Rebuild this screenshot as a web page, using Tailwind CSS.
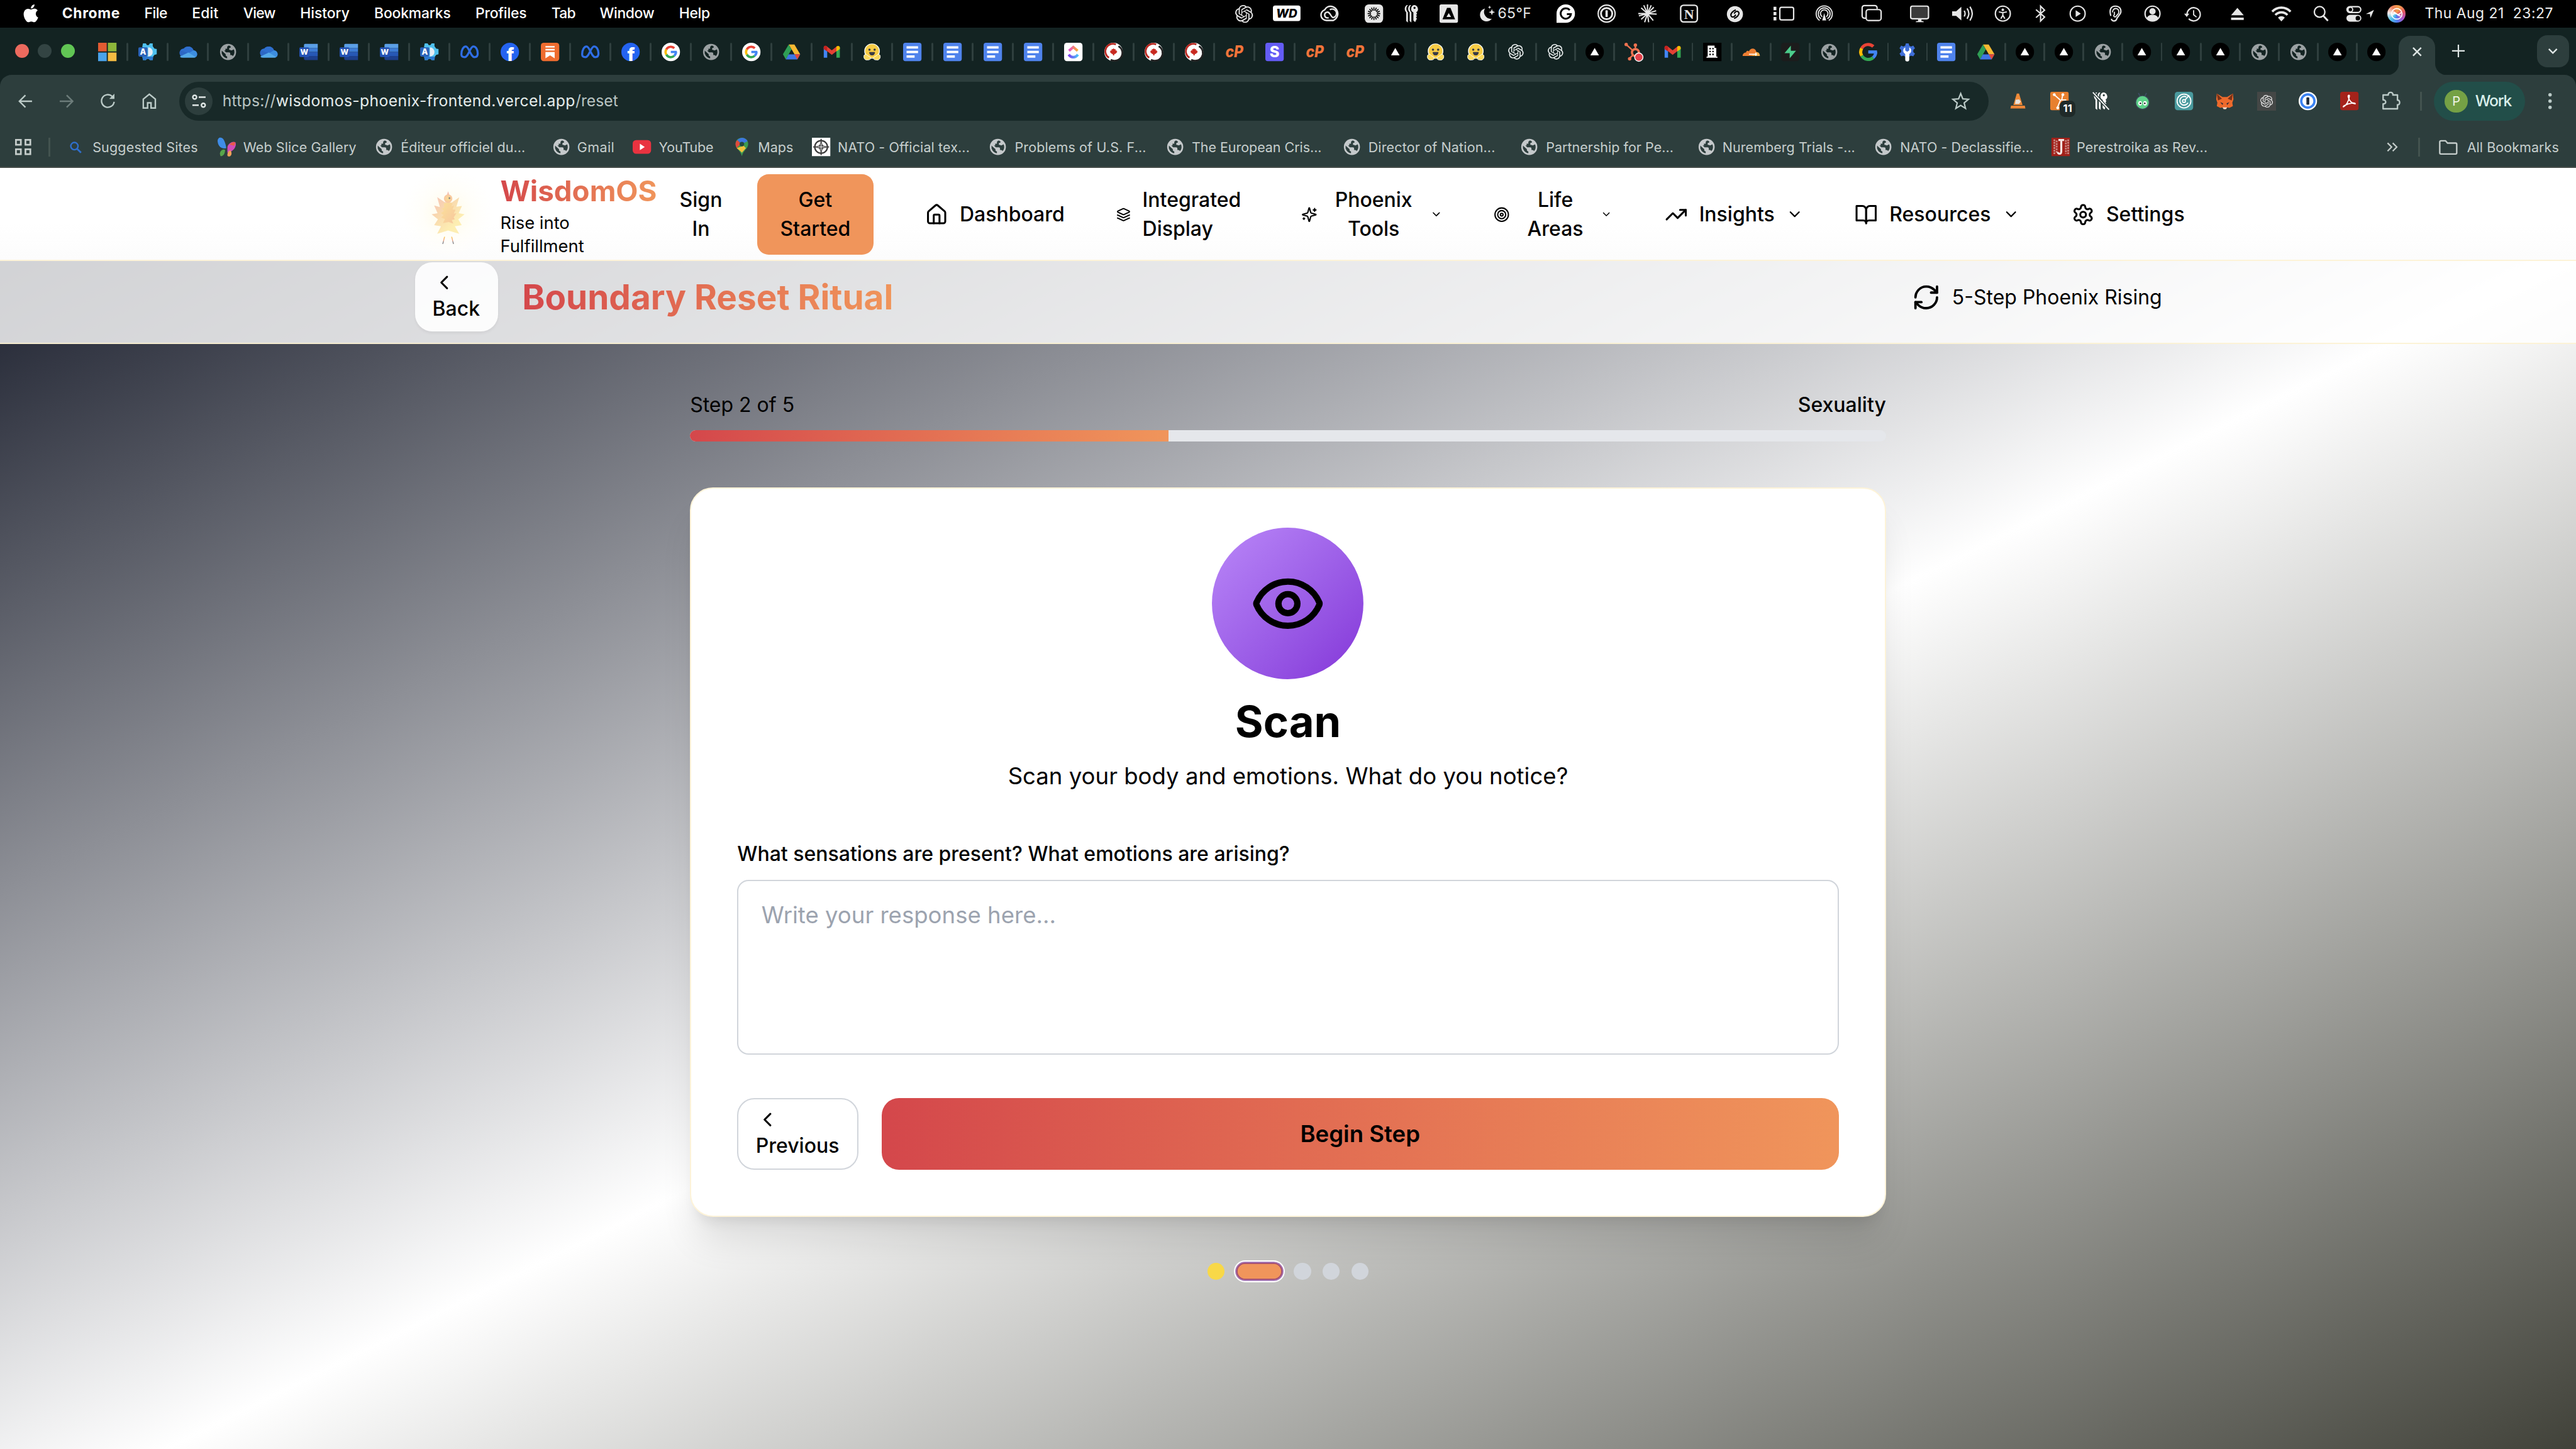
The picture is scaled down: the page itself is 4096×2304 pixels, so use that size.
<!DOCTYPE html>
<html lang="en">
<head>
<meta charset="utf-8">
<title>WisdomOS – Boundary Reset Ritual</title>
<script src="https://cdn.jsdelivr.net/npm/@tailwindcss/browser@4"></script>
</head>
<body class="w-[4096px] h-[2304px] overflow-hidden bg-black font-['Inter',sans-serif]">

<!-- Desktop menu bar and browser frame -->
<div class="[zoom:0.9142857] w-[4480px] h-[292px] flex flex-col">
  <div id="menubar" class="h-[48px] bg-black flex items-center text-white"></div>
  <div class="h-[82px] bg-[#132322] flex items-end">
    <div id="tabs" class="w-[4172px] h-[82px] pt-[2px] flex items-center"></div>
    <div class="relative w-[63px] h-[68px] rounded-t-[20px] bg-[#2d3e3d] flex items-center justify-center text-[#dfe6e5]">
      <svg class="absolute -left-[20px] bottom-0 w-[20px] h-[20px]" viewBox="0 0 20 20"><path d="M20 0V20H0A20 20 0 0 0 20 0Z" fill="#2d3e3d"/></svg>
      <svg class="absolute -right-[20px] bottom-0 w-[20px] h-[20px]" viewBox="0 0 20 20"><path d="M0 0V20H20A20 20 0 0 1 0 0Z" fill="#2d3e3d"/></svg>
      <svg class="w-[16px] h-[16px] mb-[12px]" viewBox="0 0 16 16"><path d="M1 1 15 15M15 1 1 15" stroke="currentColor" stroke-width="2.6" fill="none"/></svg>
    </div>
    <div id="tabtools" class="w-[245px] h-[82px] flex items-center text-[#dfe6e5]"></div>
  </div>
  <div class="bg-[#132322]">
    <div id="toolbar" class="h-[92px] bg-[#2d3e3d] rounded-t-[20px] flex items-center"></div>
  </div>
  <div id="bookmarks" class="h-[68px] bg-[#2d3e3d] flex items-center"></div>
  <div class="h-[2px] bg-[#444c49]"></div>
</div>

<!-- Page -->
<div class="[zoom:2.2857143] w-[1792px] h-[892px] flex flex-col overflow-hidden bg-white text-black">
  <nav class="h-[64.8px] shrink-0 border-b border-[#fdf3d8] bg-linear-to-b from-white from-60% to-[#fcfcfc] flex items-center pl-72 pt-[0.8px] text-sm font-medium">
    <div class="w-12 h-12 shrink-0">
      <svg class="w-12 h-12 overflow-visible" viewBox="180 66 360 360">
        <defs>
          <radialGradient id="glow"><stop offset="0" stop-color="#fffbe6"/><stop offset="0.55" stop-color="#fffef9"/><stop offset="1" stop-color="#fffefb" stop-opacity="0"/></radialGradient>
          <linearGradient id="wing" x1="0.1" y1="0" x2="0.75" y2="0.7"><stop offset="0" stop-color="#f5c6b8"/><stop offset="0.45" stop-color="#f9d9ae"/><stop offset="1" stop-color="#fdeeb2"/></linearGradient>
          <linearGradient id="breast" x1="0" y1="0" x2="1" y2="1"><stop offset="0" stop-color="#fbe09a"/><stop offset="1" stop-color="#f7c79e"/></linearGradient>
          <radialGradient id="head"><stop offset="0" stop-color="#fcdf92"/><stop offset="1" stop-color="#f8c6a2"/></radialGradient>
          <linearGradient id="leg" x1="0" y1="0" x2="0" y2="1"><stop offset="0" stop-color="#fbc94e"/><stop offset="0.5" stop-color="#f0a386"/><stop offset="0.75" stop-color="#77777c"/></linearGradient>
        </defs>
        <circle cx="359" cy="240" r="240" fill="url(#glow)"/>
        <path d="M340 182 302 156 316 208 286 200 304 240 273 246 306 272 286 302 322 308 302 347 359 330 417 347 394 308 430 302 412 272 445 246 414 240 431 202 402 206 417 157 378 184Z" fill="url(#wing)"/>
        <path d="M336 190 359 184 382 190 376 205 390 200 382 220 398 222 388 242 402 240 388 262 394 272 378 275 386 294 362 286 332 292 342 270 322 262 336 250 322 240 338 228 326 215 340 210Z" fill="url(#breast)"/>
        <path d="M359 126 367 148H351Z" fill="#f6c3b2"/>
        <circle cx="359" cy="164" r="22" fill="url(#head)"/>
        <circle cx="366" cy="161" r="5" fill="#8b8d86"/>
        <path d="M343 363 333 401H329L338 363ZM375 363H380L389 401H385Z" fill="url(#leg)"/>
      </svg>
    </div>
    <div class="w-[110px] shrink-0 ml-3">
      <div class="text-xl font-bold w-fit bg-linear-to-r from-[#d4474b] to-[#f0955b] bg-clip-text text-transparent">WisdomOS</div>
      <div class="text-xs font-normal w-20">Rise into Fulfillment</div>
    </div>
    <div class="w-[59.2px] shrink-0 text-center">Sign<br>In</div>
    <div class="w-[80.8px] shrink-0 ml-[9.6px] py-2 rounded-lg bg-[#f0955b] text-center">Get<br>Started</div>
    <div class="w-[133.2px] shrink-0 ml-9 flex items-center gap-2">
      <svg class="w-4 h-4 shrink-0" viewBox="0 0 24 24" fill="none" stroke="currentColor" stroke-width="2" stroke-linecap="round" stroke-linejoin="round"><path d="M15 21v-8a1 1 0 0 0-1-1h-4a1 1 0 0 0-1 1v8"/><path d="M3 10a2 2 0 0 1 .709-1.528l7-5.999a2 2 0 0 1 2.582 0l7 5.999A2 2 0 0 1 21 10v9a2 2 0 0 1-2 2H5a2 2 0 0 1-2-2z"/></svg>
      Dashboard
    </div>
    <div class="w-[128.4px] shrink-0 flex items-center gap-2">
      <svg class="w-[10px] h-4 shrink-0" viewBox="0 0 24 24" fill="none" stroke="currentColor" stroke-width="2" stroke-linecap="round" stroke-linejoin="round"><path d="m12.83 2.18a2 2 0 0 0-1.66 0L2.6 6.08a1 1 0 0 0 0 1.83l8.58 3.91a2 2 0 0 0 1.66 0l8.58-3.9a1 1 0 0 0 0-1.83Z"/><path d="m22 17.65-9.17 4.16a2 2 0 0 1-1.66 0L2 17.65"/><path d="m22 12.65-9.17 4.16a2 2 0 0 1-1.66 0L2 12.65"/></svg>
      <span>Integrated<br>Display</span>
    </div>
    <div class="w-[134px] shrink-0 flex items-center gap-2">
      <svg class="w-[11.2px] h-4 shrink-0" viewBox="0 0 24 24" fill="none" stroke="currentColor" stroke-width="2" stroke-linecap="round" stroke-linejoin="round"><path d="M9.937 15.5A2 2 0 0 0 8.5 14.063l-6.135-1.582a.5.5 0 0 1 0-.962L8.5 9.936A2 2 0 0 0 9.937 8.5l1.582-6.135a.5.5 0 0 1 .963 0L14.063 8.5A2 2 0 0 0 15.5 9.937l6.135 1.581a.5.5 0 0 1 0 .964L15.5 14.063a2 2 0 0 0-1.437 1.437l-1.582 6.135a.5.5 0 0 1-.963 0z"/><path d="M20 3v4M22 5h-4M4 17v2M5 18H3"/></svg>
      <span class="w-[62.4px] text-center">Phoenix<br>Tools</span>
      <svg class="w-[8.6px] h-3 shrink-0" viewBox="0 0 24 24" fill="none" stroke="currentColor" stroke-width="2" stroke-linecap="round" stroke-linejoin="round"><path d="m6 9 6 6 6-6"/></svg>
    </div>
    <div class="w-[118.8px] shrink-0 flex items-center gap-2">
      <svg class="w-[11.2px] h-4 shrink-0" viewBox="0 0 24 24" fill="none" stroke="currentColor" stroke-width="1.9"><circle cx="12" cy="12" r="10"/><circle cx="12" cy="12" r="6"/><circle cx="12" cy="12" r="2"/></svg>
      <span class="w-[47.2px] text-center">Life<br>Areas</span>
      <svg class="w-[8px] h-3 shrink-0" viewBox="0 0 24 24" fill="none" stroke="currentColor" stroke-width="2" stroke-linecap="round" stroke-linejoin="round"><path d="m6 9 6 6 6-6"/></svg>
    </div>
    <div class="w-[132.4px] shrink-0 flex items-center gap-2">
      <svg class="w-4 h-4 shrink-0" viewBox="0 0 24 24" fill="none" stroke="currentColor" stroke-width="2" stroke-linecap="round" stroke-linejoin="round"><path d="M22 7 13.5 15.5 8.5 10.5 2 17"/><path d="M16 7h6v6"/></svg>
      Insights
      <svg class="w-3 h-3 shrink-0" viewBox="0 0 24 24" fill="none" stroke="currentColor" stroke-width="2" stroke-linecap="round" stroke-linejoin="round"><path d="m6 9 6 6 6-6"/></svg>
    </div>
    <div class="w-[150.8px] shrink-0 flex items-center gap-2">
      <svg class="w-4 h-4 shrink-0" viewBox="0 0 24 24" fill="none" stroke="currentColor" stroke-width="2" stroke-linecap="round" stroke-linejoin="round"><path d="M2 3h6a4 4 0 0 1 4 4v14a3 3 0 0 0-3-3H2z"/><path d="M22 3h-6a4 4 0 0 0-4 4v14a3 3 0 0 1 3-3h7z"/></svg>
      Resources
      <svg class="w-3 h-3 shrink-0" viewBox="0 0 24 24" fill="none" stroke="currentColor" stroke-width="2" stroke-linecap="round" stroke-linejoin="round"><path d="m6 9 6 6 6-6"/></svg>
    </div>
    <div class="shrink-0 flex items-center gap-2">
      <svg class="w-4 h-4 shrink-0" viewBox="0 0 24 24" fill="none" stroke="currentColor" stroke-width="2" stroke-linecap="round" stroke-linejoin="round"><path d="M12.22 2h-.44a2 2 0 0 0-2 2v.18a2 2 0 0 1-1 1.73l-.43.25a2 2 0 0 1-2 0l-.15-.08a2 2 0 0 0-2.73.73l-.22.38a2 2 0 0 0 .73 2.73l.15.1a2 2 0 0 1 1 1.72v.51a2 2 0 0 1-1 1.74l-.15.09a2 2 0 0 0-.73 2.73l.22.38a2 2 0 0 0 2.73.73l.15-.08a2 2 0 0 1 2 0l.43.25a2 2 0 0 1 1 1.73V20a2 2 0 0 0 2 2h.44a2 2 0 0 0 2-2v-.18a2 2 0 0 1 1-1.73l.43-.25a2 2 0 0 1 2 0l.15.08a2 2 0 0 0 2.73-.73l.22-.39a2 2 0 0 0-.73-2.73l-.15-.08a2 2 0 0 1-1-1.74v-.5a2 2 0 0 1 1-1.74l.15-.09a2 2 0 0 0 .73-2.73l-.22-.38a2 2 0 0 0-2.73-.73l-.15.08a2 2 0 0 1-2 0l-.43-.25a2 2 0 0 1-1-1.73V4a2 2 0 0 0-2-2z"/><circle cx="12" cy="12" r="3"/></svg>
      Settings
    </div>
  </nav>

  <div class="flex-1 bg-[linear-gradient(to_bottom_right,#1b1f2d,#ffffff_50%,#34352c)] bg-[length:1792px_891.2px] bg-[position:0_-7.2px] bg-no-repeat">
    <header class="h-[57.6px] bg-white/80 border-b border-[#fbf0cc]/80 pl-[288.8px] pr-72 pt-[0.8px] flex items-start">
      <button class="w-[57.6px] h-12 shrink-0 rounded-xl bg-white/90 shadow-xs text-sm font-medium text-left px-3 pt-[4.2px] flex flex-col">
        <svg class="w-4 h-4 mt-[2px]" viewBox="0 0 24 24" fill="none" stroke="currentColor" stroke-width="2" stroke-linecap="round" stroke-linejoin="round"><path d="m15 18-6-6 6-6"/></svg>
        <span>Back</span>
      </button>
      <h1 class="ml-[16.8px] mt-[8.4px] text-2xl font-bold bg-linear-to-r from-[#d4474b] to-[#f0955b] bg-clip-text text-transparent">Boundary Reset Ritual</h1>
      <div class="ml-auto mt-[14.3px] flex items-center gap-2 text-sm">
        <svg class="w-5 h-5" viewBox="0 0 24 24" fill="none" stroke="currentColor" stroke-width="2" stroke-linecap="round" stroke-linejoin="round"><path d="M3 12a9 9 0 0 1 9-9 9.75 9.75 0 0 1 6.74 2.74L21 8"/><path d="M21 3v5h-5"/><path d="M21 12a9 9 0 0 1-9 9 9.75 9.75 0 0 1-6.74-2.74L3 16"/><path d="M8 16H3v5"/></svg>
        5-Step Phoenix Rising
      </div>
    </header>

    <main class="w-[832px] mx-auto pt-8">
      <div class="pt-[0.3px] -mb-[0.3px] flex justify-between text-sm"><span>Step 2 of 5</span><span class="font-medium">Sexuality</span></div>
      <div class="mt-2 h-2 rounded-full bg-[#e5e7eb] overflow-hidden"><div class="h-2 w-2/5 bg-linear-to-r from-[#d4474b] to-[#f0955b]"></div></div>

      <section class="mt-8 h-[507.2px] rounded-2xl border border-[#fdf3d8] bg-white px-8 pt-8 shadow-xl flex flex-col">
        <div class="w-24 h-24 mx-auto rounded-full scale-110 bg-linear-to-br from-[#ba87f8] to-[#8434d8] flex items-center justify-center">
          <svg class="w-12 h-12" viewBox="0 0 24 24" fill="none" stroke="currentColor" stroke-width="2" stroke-linecap="round" stroke-linejoin="round"><path d="M2.062 12.348a1 1 0 0 1 0-.696 10.75 10.75 0 0 1 19.876 0 1 1 0 0 1 0 .696 10.75 10.75 0 0 1-19.876 0"/><circle cx="12" cy="12" r="3"/></svg>
        </div>
        <h2 class="mt-[16.4px] -mb-[0.4px] text-3xl font-bold text-center">Scan</h2>
        <p class="mt-2 text-base text-center">Scan your body and emotions. What do you notice?</p>
        <label class="mt-[32.2px] -mb-[0.2px] text-sm font-medium">What sensations are present? What emotions are arising?</label>
        <div class="mt-2 h-[121.6px] shrink-0 rounded-lg border border-[#d1d5db] px-4 py-3 text-base text-[#9ca3af]">Write your response here...</div>
        <div class="mt-[30.4px] h-[49.6px] flex gap-4">
          <button class="w-[84.4px] shrink-0 rounded-xl border border-[#d1d5db] px-3 pt-[6px] text-sm font-medium flex flex-col items-start">
            <svg class="w-4 h-4" viewBox="0 0 24 24" fill="none" stroke="currentColor" stroke-width="2" stroke-linecap="round" stroke-linejoin="round"><path d="m15 18-6-6 6-6"/></svg>
            <span>Previous</span>
          </button>
          <button class="flex-1 rounded-xl bg-linear-to-r from-[#d4474b] to-[#f0955b] text-base font-semibold">Begin Step</button>
        </div>
      </section>

      <div class="mt-8 flex justify-center gap-2">
        <span class="w-3 h-3 rounded-full bg-[#f8d848]"></span>
        <span class="w-8 h-3 rounded-full bg-[#f0955b] shadow-[inset_0_0_0_0.8px_#a04c74,0_0_0_0.8px_#a071b4,0_0_0_1.7px_#ffffff]"></span>
        <span class="w-3 h-3 rounded-full bg-[#d1d5db]"></span>
        <span class="w-3 h-3 rounded-full bg-[#d1d5db]"></span>
        <span class="w-3 h-3 rounded-full bg-[#d1d5db]"></span>
      </div>
    </main>
  </div>
</div>

<script>
const svg = (inner, w = 32, h = 32, vb) => `<svg width="${w}" height="${h}" viewBox="${vb || `0 0 ${w} ${h}`}" fill="none" class="shrink-0 overflow-visible">${inner}</svg>`;
const letter = (t, x, y, size, fill, extra = '') => `<text x="${x}" y="${y}" font-size="${size}" fill="${fill}" text-anchor="middle" font-family="Inter,sans-serif" font-weight="800" ${extra}>${t}</text>`;
const OPENAI = 'M22.2819 9.8211a5.9847 5.9847 0 0 0-.5157-4.9108 6.0462 6.0462 0 0 0-6.5098-2.9A6.0651 6.0651 0 0 0 4.9807 4.1818a5.9847 5.9847 0 0 0-3.9977 2.9 6.0462 6.0462 0 0 0 .7427 7.0966 5.98 5.98 0 0 0 .511 4.9107 6.051 6.051 0 0 0 6.5146 2.9001A5.9847 5.9847 0 0 0 13.2599 24a6.0557 6.0557 0 0 0 5.7718-4.2058 5.9894 5.9894 0 0 0 3.9977-2.9001 6.0557 6.0557 0 0 0-.7475-7.0729zm-9.022 12.6081a4.4755 4.4755 0 0 1-2.8764-1.0408l.1419-.0804 4.7783-2.7582a.7948.7948 0 0 0 .3927-.6813v-6.7369l2.02 1.1686a.071.071 0 0 1 .038.052v5.5826a4.504 4.504 0 0 1-4.4945 4.4944zm-9.6607-4.1254a4.4708 4.4708 0 0 1-.5346-3.0137l.142.0852 4.783 2.7582a.7712.7712 0 0 0 .7806 0l5.8428-3.3685v2.3324a.0804.0804 0 0 1-.0332.0615L9.74 19.9502a4.4992 4.4992 0 0 1-6.1408-1.6464zM2.3408 7.8956a4.485 4.485 0 0 1 2.3655-1.9728V11.6a.7664.7664 0 0 0 .3879.6765l5.8144 3.3543-2.0201 1.1685a.0757.0757 0 0 1-.071 0l-4.8303-2.7865A4.504 4.504 0 0 1 2.3408 7.872zm16.5963 3.8558L13.1038 8.364 15.1192 7.2a.0757.0757 0 0 1 .071 0l4.8303 2.7913a4.4944 4.4944 0 0 1-.6765 8.1042v-5.6772a.79.79 0 0 0-.407-.667zm2.0107-3.0231l-.142-.0852-4.7735-2.7818a.7759.7759 0 0 0-.7854 0L9.409 9.2297V6.8974a.0662.0662 0 0 1 .0284-.0615l4.8303-2.7866a4.4992 4.4992 0 0 1 6.6802 4.66zM8.3065 12.863l-2.02-1.1638a.0804.0804 0 0 1-.038-.0567V6.0742a4.4992 4.4992 0 0 1 7.3757-3.4537l-.142.0805L8.704 5.459a.7948.7948 0 0 0-.3927.6813zm1.0976-2.3654l2.602-1.4998 2.6069 1.4998v2.9994l-2.5974 1.4997-2.6067-1.4997Z';
const APPLE = 'M12.152 6.896c-.948 0-2.415-1.078-3.96-1.04-2.04.027-3.91 1.183-4.961 3.014-2.117 3.675-.546 9.103 1.519 12.09 1.013 1.454 2.208 3.09 3.792 3.039 1.52-.065 2.09-.987 3.935-.987 1.831 0 2.35.987 3.96.948 1.637-.026 2.676-1.48 3.676-2.948 1.156-1.688 1.636-3.325 1.662-3.415-.039-.013-3.182-1.221-3.22-4.857-.026-3.04 2.48-4.494 2.597-4.559-1.429-2.09-3.623-2.324-4.39-2.376-2-.156-3.675 1.09-4.61 1.09zM15.53 3.83c.843-1.012 1.4-2.427 1.245-3.83-1.207.052-2.662.805-3.532 1.818-.78.896-1.454 2.338-1.273 3.714 1.338.104 2.715-.688 3.559-1.701';
const globe = (c, bg) => svg(`<circle cx="16" cy="16" r="14" fill="${c}"/><path d="M17 4.8c-1.6.6-2.6 1.8-2.6 3.2v2.4h-3v3.1H9.2l3.2 3.2h5.2c1.3 0 2.2.8 2.2 2.1v2.6h1.6c1.3 0 2.3.8 2.7 1.9 1.9-1.9 3-4.5 3-7.3 0-1.6-.4-3.1-1-4.5l-3.9 1.8-4.4-1.3V9.6l3.1-1.8c.1-1.1-1.3-3-3.9-3zM5 13.8A11.2 11.2 0 0 0 14.4 27v-3.2c-1.4 0-2.5-1.1-2.5-2.5v-1.4z" fill="${bg}"/>`);
const googleRing = (r, w) => `<path d="M16 16h${r + w / 2 - 0.5}" stroke="#4285f4" stroke-width="${w}"/><path d="M${16 + r} 16A${r} ${r} 0 0 1 ${16 + r * 0.64} ${16 + r * 0.77}" stroke="#4285f4" stroke-width="${w}"/><path d="M${16 + r * 0.64} ${16 + r * 0.77}A${r} ${r} 0 0 1 ${16 - r * 0.87} ${16 + r * 0.5}" stroke="#34a853" stroke-width="${w}"/><path d="M${16 - r * 0.87} ${16 + r * 0.5}A${r} ${r} 0 0 1 ${16 - r * 0.87} ${16 - r * 0.5}" stroke="#fbbc05" stroke-width="${w}"/><path d="M${16 - r * 0.87} ${16 - r * 0.5}A${r} ${r} 0 0 1 ${16 + r * 0.68} ${16 - r * 0.73}" stroke="#ea4335" stroke-width="${w}"/>`;
const openai = (c, s = 26) => svg(`<path d="${OPENAI}" fill="${c}"/>`, s, s, '0 0 24 24');
const keys = (c) => `<g fill="${c}"><path d="M20 1a7 7 0 0 1 4 12.7l1.5 2.6-1.8 2 1.6 2.2-1.8 2 1.6 2.3L22 31l-3-3V14A7 7 0 0 1 20 1zm1 3.2a1.8 1.8 0 1 0 0 3.6 1.8 1.8 0 0 0 0-3.6z" fill-rule="evenodd"/><path d="M13 1c-4 3-4 9-.5 12.6V29l3 2.5V14C12 10 12 5 15 1.500zM7.500 1C3 4 3 10 6.500 13.600V29l3 2.500V14C6 10 6 5 9.500 1.500z"/></g>`;
const I = {
  apple: svg(`<path d="${APPLE}" fill="#fff"/>`, 31, 31, '0 0 24 24'),
  globe: globe('#9ba1a3', '#132322'),
  bglobe: globe('#c5c9cb', '#2d3e3d'),
  ms: svg('<path d="M0 0h15v15H0z" fill="#e25b32"/><path d="M17 0h15v15H17z" fill="#8db63a"/><path d="M0 17h15v15H0z" fill="#4aa3ea"/><path d="M17 17h15v15H17z" fill="#f4bb42"/>'),
  azureA: svg(`<path d="M8 1h5l2 3h3l2-3h5v5l3 4 4 1v9l-4 1-3 4v5h-5l-2-2h-3l-2 2H8l-1-6V6z" fill="#4fc0ee"/><path d="M17 24h9l-1 6h-5l-2-2h-3l-2 2H8l-1-6z" fill="#2b78cf"/><path d="M17 8a8 8 0 0 1 0 16z" fill="#e6edf6"/><rect x="0" y="8" width="16" height="16" rx="2" fill="#2a62b8"/>${letter('A', 8, 21, 14, '#fff')}`),
  cloud: svg('<path d="M9 25.500A8 8 0 0 1 3 13a8 8 0 0 1 6-3A10 10 0 0 1 26 13a7 7 0 0 1 5 11z" fill="#2c67c4"/><path d="M9 10a10 10 0 0 1 17 3l-9 5-14-5a8 8 0 0 1 6-3z" fill="#2f6fce"/><path d="M17 18l9-5a7 7 0 0 1 4 12z" fill="#3d8ee0"/><path d="M2 24l15-7 13 8a6 6 0 0 1-3 1H8a7 7 0 0 1-6-2z" fill="#54a9e8"/>'),
  word: svg(`<path d="M10 2h22v7H8V4a2 2 0 0 1 2-2z" fill="#5b9fe6"/><path d="M8 9h24v7H8z" fill="#3d7cd4"/><path d="M8 16h24v7H8z" fill="#2758b5"/><path d="M8 23h24v7H10a2 2 0 0 1-2-2z" fill="#1d3f8c"/><rect x="0" y="8" width="17" height="17" rx="2" fill="#2452b4"/>${letter('W', 8.500, 21, 13, '#fff')}`),
  meta: svg('<path d="M1.800 20C1.800 12 5.500 6.500 9.500 6.500 15 6.500 18 25 24.500 25 28.500 25 30.200 22 30.200 18.500 30.200 12 27 6.500 22.500 6.500 17 6.500 14 25 7.500 25 3.500 25 1.800 23.500 1.800 20Z" stroke="#2f6ee6" stroke-width="3.600"/>'),
  fb: svg(`<circle cx="16" cy="16" r="16" fill="#2463f0"/>${letter('f', 17, 32, 32, '#fff')}`),
  substack: svg('<rect width="32" height="32" rx="5" fill="#ef6c2f"/><path d="M8 7h16M8 12h16" stroke="#fff" stroke-width="2.600"/><path d="M8 16h16v11l-8-5-8 5z" fill="#fff"/>'),
  google: svg(`<circle cx="16" cy="16" r="16" fill="#fff"/>${googleRing(9, 4)}`),
  googleBare: svg(googleRing(13, 5.5)),
  drive: svg('<path d="M11 3h10l10 17H21z" fill="#f6b932"/><path d="M11 3l5 8.700L6 29l-5-9z" fill="#2f9e55"/><path d="M11 20h20l-5 9H6z" fill="#3f76e4"/><path d="M21 20h10l-5 9z" fill="#e2493a"/><path d="M16 11.700 20.700 20H11.300z" fill="#132322"/>'),
  gmail: svg('<path d="M2 8v18h6V13z" fill="#4285f4"/><path d="M30 8v18h-6V13z" fill="#34a853"/><path d="M2 8c0-3 3-3.500 5-2l9 7 9-7v8l-9 7-9-7-5-3z" fill="#e34134"/><path d="M24 6.500c3-2 6-1 6 2V11l-6 4z" fill="#fbbc04"/><path d="M2 8v3l6 4V6.500C5 4 2 5 2 8z" fill="#c5221f"/>'),
  hug: svg('<ellipse cx="16" cy="14.500" rx="13.500" ry="13" fill="#fff"/><circle cx="16" cy="14.500" r="12" fill="#f8cc45"/><circle cx="11.500" cy="12" r="2" fill="#3a3b45"/><circle cx="20.500" cy="12" r="2" fill="#3a3b45"/><path d="M11 16h10c0 4-2 6-5 6s-5-2-5-6z" fill="#3a3b45"/><path d="M2 22c2-3 5-2 6 0l5 3c2 4-2 5-6 5s-6-4-5-8zM30 22c-2-3-5-2-6 0l-5 3c-2 4 2 5 6 5s6-4 5-8z" fill="#fbd95b" stroke="#fff" stroke-width="1"/>'),
  docs: svg('<rect width="32" height="32" rx="4" fill="#4f83ec"/><path d="M6 8h20M6 16h20M6 24h14" stroke="#fff" stroke-width="4"/>'),
  clickup: svg('<defs><linearGradient id="cu1"><stop offset="0" stop-color="#e84bd0"/><stop offset="1" stop-color="#f9b02f"/></linearGradient><linearGradient id="cu2"><stop offset="0" stop-color="#7d3ff0"/><stop offset="1" stop-color="#4dc3f7"/></linearGradient></defs><rect width="32" height="32" rx="5" fill="#fff"/><path d="M8.500 14 16 7.500 23.500 14" stroke="url(#cu1)" stroke-width="4.500"/><path d="M8 20.500c4 6 12 6 16 0" stroke="url(#cu2)" stroke-width="4.500"/>'),
  maple: svg('<circle cx="16" cy="16" r="16" fill="#fff"/><path d="M20 3A13 13 0 0 0 8 26" stroke="#b9271f" stroke-width="3"/><path d="M11 29.500A13.500 13.500 0 0 0 24.500 6" stroke="#222" stroke-width="3"/><path d="M16 10l1.500 2 1.500-.6-.4 3.200 2-1.200.5 2 .9.400-3 3.200H16.700v2.500h-1.400V19H13l-3-3.200.9-.4.500-2 2 1.200-.4-3.200 1.500.6z" fill="#c8281f" stroke="#c8281f"/>'),
  cp: svg(letter('cP', 16, 25, 28, '#f2743a', 'font-style="italic" textLength="31" lengthAdjust="spacingAndGlyphs"')),
  s: svg(`<rect width="32" height="32" rx="4" fill="#645cf5"/>${letter('S', 16, 25, 26, '#fff')}`),
  vercel: svg('<circle cx="16" cy="16" r="16" fill="#000"/><path d="M16 9l7.500 13h-15z" fill="#fff"/>'),
  gpt: openai('#e8ecec', 27),
  hubspot: svg('<g stroke="#ee7250" fill="none"><circle cx="19" cy="17" r="6" stroke-width="4"/><path d="M19 11V5M14 13 4 4M14 22l-5 5" stroke-width="2.600"/></g><g fill="#ee7250"><circle cx="19" cy="4" r="3"/><circle cx="3" cy="3" r="3"/><circle cx="9" cy="28" r="3"/></g><circle cx="25" cy="25" r="8" fill="#fff"/><circle cx="25" cy="25" r="6.500" fill="#e2434c"/>'),
  building: svg('<path d="M0 0h32v32H0z" fill="#000"/><path d="M8 5h12v4h3v15h2v2H6v-2h2z" fill="#fff"/><path d="M11 9h2.500v2.500H11zM16 9h2.500v2.500H16zM11 14h2.500v2.500H11zM16 14h2.500v2.500H16zM11 19h2.500v2.500H11zM16 19h2.500v2.500H16z" fill="#000"/>'),
  cloudflare: svg('<path d="M1 23c0-4 3-6 6-6 0-3 3-4 5-2 2-6 11-7 13 1l-3 7z" fill="#ee7f33"/><path d="M25 16c4 0 6 3 6 7H16z" fill="#f5ac4a"/><path d="M12 20h14M24 17v6" stroke="#fff" stroke-width="1.500"/>'),
  supabase: svg('<rect width="32" height="32" rx="5" fill="#1c1c1c"/><path d="M17 5v9h9L15 27v-9H6z" fill="#4ccb8b"/>'),
  wrench: svg('<path d="M13.500 1h5l1 4 3 1.500 4-1.500 3 4.500-3 3v3.500l3 3-3 4.500-4-1-3 1.500-1 3h-5l-1-3-3-1.500-4 1-3-4.500 3-3v-3.500l-3-3L5.500 5l4 1.500 3-1.500z" fill="#3f6fd9"/><path d="M12.500 8v5.500L16 15.500l3.500-2V8a6.500 6.500 0 0 1 0 11.500V29a3.500 3.500 0 0 1-7 0v-9.500A6.500 6.500 0 0 1 12.500 8z" fill="#fff"/>'),
};

/* Lays items out in a row: [left, width, html]. */
function row(id, items) {
  let edge = 0, out = '';
  for (const [x, w, html] of items) {
    out += `<div class="shrink-0 flex items-center justify-center" style="width:${w}px;margin-left:${x - edge}px">${html}</div>`;
    edge = x + w;
  }
  document.getElementById(id).innerHTML = out;
}
const mid = (c, html, w = 32) => [c - w / 2, w, html];

/* Label tracked to fill its slot. */
const ctx = document.createElement('canvas').getContext('2d');
function label(x, w, text, size, cls, weight = 400) {
  ctx.font = `${weight} ${size}px Inter`;
  const ls = (w - ctx.measureText(text).width) / text.length;
  return [x, w, `<span class="whitespace-pre w-full ${cls}" style="font-size:${size}px;font-weight:${weight};letter-spacing:${ls.toFixed(3)}px">${text}</span>`];
}
const g = '#e6e6e6';
const M = (x, x2, t, wt = 500) => label(x, x2 - x, t, 25, 'pb-[2px]', wt);

row('menubar', [
  mid(54, `<div class="pb-[2px]">${I.apple}</div>`, 32),
  M(108, 209, 'Chrome', 700), M(251, 291, 'File'), M(334, 380, 'Edit'), M(423, 479, 'View'), M(522, 608, 'History'),
  M(651, 784, 'Bookmarks'), M(827, 916, 'Profiles'), M(959, 1001, 'Tab'), M(1043, 1138, 'Window'), M(1181, 1235, 'Help'),
  mid(2164, openai(g, 31)),
  mid(2238, svg(`<rect y="2" width="48" height="27" rx="4" fill="#fff"/>${letter('WD', 24, 23, 20, '#000', 'font-style="italic" textLength="37" lengthAdjust="spacingAndGlyphs"')}`, 48), 48),
  mid(2315, svg('<path d="M13 5.500a12 12 0 1 1 10 23.500H11A9.500 9.500 0 0 1 8 10.500 12 12 0 0 1 13 5.500z" stroke="#e6e6e6" stroke-width="2.600"/><path d="M17 10.500a7.500 7.500 0 1 1 6 13.500c-4 0-6-12-12-9a5 5 0 0 0 1 9.500h3" stroke="#e6e6e6" stroke-width="2.600"/>', 38, 34), 38),
  mid(2390, svg('<rect width="32" height="32" rx="7" fill="#e6e6e6"/><path d="M16 5v6M16 21v6M5 16h6M21 16h6M8.200 8.200l4.200 4.200M19.600 19.600l4.200 4.200M23.800 8.200l-4.200 4.200M12.400 19.600l-4.200 4.200M11.800 5.800l2 5M20.200 5.800l-2 5M11.800 26.200l2-5M20.200 26.200l-2-5M5.800 11.800l5 2M26.200 11.800l-5 2M5.800 20.200l5-2M26.200 20.200l-5-2" stroke="#000" stroke-width="1.800"/>')),
  mid(2455, svg(keys(g))),
  mid(2520, svg('<rect width="32" height="32" rx="3" fill="#e6e6e6"/><path d="M13 6h6l8 20H5z" fill="#000"/><path d="M16 15l4 7h-8z" fill="#e6e6e6"/>')),
  mid(2587.5, svg('<path d="M9 7a12 12 0 0 0 12 18A11.500 11.500 0 1 1 9 7z" fill="#e6e6e6"/><path d="M21 8l1.500 4 4 1.500-4 1.500L21 19l-1.500-4-4-1.500 4-1.500zM17 2l.8 2.200L20 5l-2.200.8L17 8l-.8-2.200L14 5l2.200-.8z" fill="#e6e6e6"/>', 28)),
  label(2605, 59, '65°F', 25, 'pb-[2px] text-[#e6e6e6]'),
  mid(2723.7, svg('<path d="M0 32V16A16 16 0 1 1 16 32z" fill="#fff"/><path d="M23 10a9 9 0 1 0 2 7h-7" stroke="#000" stroke-width="3.200"/>')),
  mid(2794, svg('<circle cx="16" cy="16" r="14.700" stroke="#e6e6e6" stroke-width="2.400"/><circle cx="16" cy="16" r="9.800" stroke="#e6e6e6" stroke-width="3.200"/><rect x="14" y="10" width="4" height="12" rx="1" fill="#e6e6e6"/>')),
  mid(2866, svg('<path d="M16 16V0M16 16 18 31M16 16H0M16 16 32 17M16 16 5 6M16 16 27 5M16 16 5 26M16 16 26 28M16 16 9.500 1.500M16 16 11 31M16 16 22.500 1.500M16 16 31 11M16 16 1 20" stroke="#e6e6e6" stroke-width="2.200"/>')),
  mid(2938, svg('<rect x="1.500" y="1.500" width="29" height="29" rx="5" stroke="#e6e6e6" stroke-width="2.600"/><text x="16" y="25" font-size="24" font-weight="700" text-anchor="middle" fill="#e6e6e6" font-family="Liberation Serif,serif">N</text>')),
  mid(3017.6, svg('<circle cx="16" cy="17" r="14" fill="#e6e6e6"/><path d="M17.500 9.500c-5 2-9 6-8.500 9.500.5 3 4 4 6.500 1.500l2-2.500M14.500 24.500c5-2 9-6 8.500-9.500-.5-3-4-4-6.500-1.500l-2 2.500" stroke="#000" stroke-width="2.300"/>')),
  mid(3102.5, svg('<rect x="11" y="5" width="24" height="22" rx="3" stroke="#e6e6e6" stroke-width="2.400"/><path d="M0 4h5v6H0zM0 13h5v6H0zM0 22h5v6H0z" fill="#e6e6e6"/>', 36), 36),
  mid(3173, svg('<path d="M8 28A14 14 0 1 1 24 28M10.500 25A10.300 10.300 0 1 1 21.500 25M12.500 21.500A6.500 6.500 0 1 1 19.500 21.500" stroke="#e6e6e6" stroke-width="2"/><path d="M16 15l3.500 13h-7z" fill="#e6e6e6"/>')),
  mid(3255.6, svg('<path d="M8 24H5a4 4 0 0 1-4-4V6a4 4 0 0 1 4-4h18a4 4 0 0 1 4 4v2" stroke="#e6e6e6" stroke-width="2.400"/><rect x="8" y="9" width="26" height="19" rx="4" stroke="#e6e6e6" stroke-width="2.400"/>', 36), 36),
  mid(3339.7, svg('<rect x="1.200" y="3" width="31" height="22" rx="3" fill="#3a3a3a" stroke="#e6e6e6" stroke-width="2.400"/><path d="M10 31c0-2 2-2 4-2v-4h6v4c2 0 4 0 4 2z" fill="#e6e6e6"/>', 34), 34),
  mid(3414, svg('<path d="M0 12h7l9-8v24l-9-8H0z" fill="#e6e6e6"/><path d="M21 11q3 5 0 10M26 7q6 9 0 18M31 4q8 12 0 24" stroke="#e6e6e6" stroke-width="2.400"/>', 38), 38),
  mid(3484, svg('<circle cx="16" cy="16" r="13" stroke="#e6e6e6" stroke-width="2.400"/><circle cx="16" cy="9.500" r="2.300" fill="#e6e6e6"/><path d="M9 13l7 1.500 7-1.500M16 14v5l-3.500 6M16 19l3.500 6" stroke="#e6e6e6" stroke-width="2.200"/>')),
  mid(3549, svg('<path d="M8 9l15 13-7 7V3l7 7L8 23" stroke="#e6e6e6" stroke-width="2.300"/>')),
  mid(3614, svg('<circle cx="16" cy="16" r="13" stroke="#e6e6e6" stroke-width="2.400"/><path d="M12.500 10l9 6-9 6z" fill="#e6e6e6"/>')),
  mid(3680, svg('<path d="M8 20C5 9 8 3 16 3c7 0 11 5 9 12-2 5-6 6-7 11-2 4-8 4-9-1" stroke="#e6e6e6" stroke-width="2.400"/><path d="M11 14c0-9 11-9 11-1 0 5-4 5-5 8-3 2-5-1-3-3s-2-2 1-5" stroke="#e6e6e6" stroke-width="2"/>')),
  mid(3744, svg('<circle cx="16" cy="16" r="13" stroke="#e6e6e6" stroke-width="2.400"/><circle cx="16" cy="12" r="5.500" fill="#e6e6e6"/><path d="M6 24c2-8 18-8 20 0-5 6-15 6-20 0z" fill="#e6e6e6"/>')),
  mid(3814, svg('<path d="M6 17A11.500 11.500 0 1 1 9 25" stroke="#e6e6e6" stroke-width="2.400"/><path d="M1 16h9l-4.500 6z" fill="#e6e6e6"/><path d="M17.500 10v8l5 4" stroke="#e6e6e6" stroke-width="2"/>')),
  mid(3891.500, svg('<path d="M16 6l11 13H5zM5 23h22v4H5z" fill="#e6e6e6"/>')),
  mid(3968, svg('<path d="M1 12.500a22 22 0 0 1 32 0M6.500 18.500a14 14 0 0 1 21 0" stroke="#e6e6e6" stroke-width="4"/><path d="M11 23a8.500 8.500 0 0 1 12 0l-6 6.500z" fill="#e6e6e6"/>', 34), 34),
  mid(4037, svg('<circle cx="13.500" cy="13" r="9.200" stroke="#e6e6e6" stroke-width="2.500"/><path d="M20 20l8 8.500" stroke="#e6e6e6" stroke-width="3.200"/>')),
  mid(4094, svg('<rect x="2" y="4" width="24" height="10" rx="5" stroke="#e6e6e6" stroke-width="2.400"/><circle cx="8" cy="9" r="4" stroke="#e6e6e6" stroke-width="2"/><rect x="1" y="18" width="26" height="12" rx="6" fill="#e6e6e6"/><circle cx="21" cy="24" r="4" fill="#000"/>', 28), 28),
  mid(4122, svg('<path d="M15 3 9 17 8 10 1 10z" fill="#e6e6e6"/>', 16, 20), 16),
  mid(4168.500, '<div class="w-[31px] h-[31px] rounded-full bg-[conic-gradient(from_20deg,#f0a24a,#e7595f,#b455c7,#4f7df0,#53c4e8,#f3e9ea,#f07f5a,#f0a24a)] flex items-center justify-center">' + svg('<circle cx="12" cy="12" r="10" stroke="#fff" stroke-width="2"/><path d="M4 15C8 4 14 20 20 9M5 9c4-3 10 10 14 6" stroke="#fff" stroke-width="2"/>', 22, 22, '0 0 24 24') + '</div>'),
  label(4217.500, 224, 'Thu Aug 21  23:27', 25, 'pb-[2px] text-[#ececec]'),
]);

const order = 'ms azureA cloud globe cloud word word word azureA meta fb substack meta fb google globe google drive gmail hug docs docs docs docs clickup maple maple maple cp s cp cp vercel hug hug gpt gpt vercel hubspot gmail building cloudflare supabase globe googleBare wrench docs drive vercel vercel globe vercel vercel vercel globe globe vercel vercel'.split(' ');
const dot = (cls) => `<div class="w-[24px] h-[24px] mb-[2px] rounded-full ${cls}"></div>`;
row('tabs', [
  mid(38, dot('bg-[#ec6a5e]'), 24), mid(78, dot('bg-[#334443]'), 24), mid(118, dot('bg-[#61c554]'), 24),
  ...order.map((k, i) => {
    const w = i < 36 ? 70 : 68, x = i < 36 ? 153 + i * 70 : 2673 + (i - 36) * 68;
    return [x, w, `<div class="flex-1 flex items-center justify-center">${I[k]}</div><div class="w-[3px] h-[32px] rounded-full ${i < order.length - 1 ? 'bg-[#2f3f3e]' : ''}"></div>`];
  }),
]);
row('tabtools', [
  mid(40.500, svg('<path d="M12 1v22M1 12h22" stroke="currentColor" stroke-width="2.400"/>', 24, 24), 24),
  [177, 56, '<div class="w-[56px] h-[56px] rounded-[18px] bg-[#2d3e3d] flex items-center justify-center">' + svg('<path d="M2 2l7 7 7-7" stroke="currentColor" stroke-width="2.600"/>', 18, 12) + '</div>'],
]);

row('toolbar', [
  mid(44, svg('<path d="M24 12H2M12.500 1.500 2 12l10.500 10.500" stroke="#bccbc8" stroke-width="2.600"/>', 25, 24), 25),
  mid(116, svg('<path d="M0 12h22M12 1.500 22.500 12 12 22.500" stroke="#6d7d7b" stroke-width="2.600"/>', 24, 24), 24),
  mid(188, svg('<path d="M23.500 14A11 11 0 1 1 20 4.500l3 3" stroke="#bccbc8" stroke-width="2.600"/><path d="M24 0v9h-9z" fill="#bccbc8"/>', 26, 26), 26),
  mid(260, svg('<path d="M2 10.500 12.500 2 23 10.500V26h-7.500v-9h-6v9H2z" stroke="#bccbc8" stroke-width="2.600"/>', 25, 28), 25),
  [312, 3146, '<div class="w-full h-[68px] rounded-full bg-[#182928] flex items-center"><div class="ml-[10px] w-[48px] h-[48px] rounded-full bg-[#2d3e3d] flex items-center justify-center">'
    + svg('<circle cx="5" cy="6" r="3.300" stroke="#dfe6e5" stroke-width="2.600"/><path d="M12 6h12M1 20h11" stroke="#dfe6e5" stroke-width="2.800"/><circle cx="20" cy="20" r="3.300" stroke="#dfe6e5" stroke-width="2.600"/>', 25, 26)
    + '</div><div id="url" class="ml-[17px] flex"></div><div class="ml-auto mr-[32px]">'
    + svg('<path d="M16 3l3.700 9.200 9.800.7-7.500 6.300 2.400 9.600L16 23.500l-8.400 5.300L10 19.200 2.500 12.900l9.800-.7z" stroke="#bccbc8" stroke-width="2.400"/>') + '</div></div>'],
  mid(3510, svg('<path d="M14 3h4l6 20H8z" fill="#f08a38"/><path d="M4 24h24l1 5H3z" fill="#ee8637"/><path d="M12 14l6-1 3 4-3 4h-7z" fill="#e8e3dd"/>')),
  mid(3582, '<div class="relative">' + svg('<rect width="32" height="32" rx="3" fill="#e8802f"/><g stroke="#fff" stroke-width="2"><path d="M7 5l10 9M22 4l-2 10M18 14l-5 12M18 14h10"/></g><g fill="#fff"><circle cx="7" cy="5" r="2.500"/><circle cx="22" cy="5" r="2.500"/><circle cx="13" cy="28" r="2.500"/></g>')
    + '<span class="absolute left-[16px] top-[15px] w-[28px] h-[28px] rounded-[9px] bg-[#1f2a29] text-white text-[18px] font-bold leading-[28px] text-center">11</span></div>'),
  mid(3654, svg(keys('#fff') + '<path d="M2 1l28 30" stroke="#2d3e3d" stroke-width="5"/><path d="M2 1l28 30" stroke="#fff" stroke-width="2"/>')),
  mid(3726, svg('<path d="M12 8 9 2M20 8l3-6" stroke="#3f4c63" stroke-width="2"/><circle cx="16" cy="18.500" r="12.500" fill="#3a4b58"/><circle cx="16" cy="18.500" r="11" fill="#5fd28a"/><ellipse cx="12" cy="20" rx="3.200" ry="3.800" fill="#fff"/><ellipse cx="20.500" cy="20" rx="3.200" ry="3.800" fill="#fff"/><circle cx="12.500" cy="20" r="1.400" fill="#222"/><circle cx="20" cy="20" r="1.400" fill="#222"/>')),
  mid(3798, svg('<rect width="32" height="32" rx="5" fill="#4a9a9e"/><circle cx="16" cy="16" r="12" stroke="#fff" stroke-width="2"/><path d="M20 9A7.500 7.500 0 1 0 23 19" stroke="#fff" stroke-width="2.200"/><circle cx="16" cy="16" r="2.500" stroke="#fff" stroke-width="2"/><path d="M18 14l7-8" stroke="#fff" stroke-width="2"/>')),
  mid(3870, svg('<path d="M2 3l10 6h8l10-6 1 10-2 6 1 6-6 3-4-1-2 3h-4l-2-3-4 1-6-3 1-6-2-6z" fill="#ee6a2c"/><path d="M2 3l9 9-7 3zM30 3l-9 9 7 3z" fill="#7a3218"/><path d="M8 18l5 2-1 3zM24 18l-5 2 1 3z" fill="#2c2c3a"/><path d="M12 27h8l-2 3h-4z" fill="#e9dfd8"/>')),
  mid(3942, '<div class="w-[32px] h-[32px] bg-[#444746] flex items-center justify-center">' + openai('#e2e2e2', 22) + '</div>'),
  mid(4014, svg('<circle cx="16" cy="16" r="16" fill="#fff"/><circle cx="16" cy="16" r="11.500" stroke="#3b82f2" stroke-width="4"/><rect x="13.500" y="9.500" width="5" height="13" rx="1.500" fill="#1e2a3a"/>')),
  mid(4086, svg('<rect width="32" height="32" rx="4" fill="#a5231b"/><path d="M6 26c4-2 9-9 10-18 1-3-3-3-2 1 2 7 6 11 12 12 2-2-8-3-19 3-2 2-2 2-1 2z" stroke="#fff" stroke-width="2"/>')),
  mid(4158, svg('<path d="M2.500 5.500h9c-1-6 9-6 8 0h8v9c5-1 5 9 0 8v7h-25v-8.500c6 0 6-7 0-7z" stroke="#bccbc8" stroke-width="2.600" stroke-linejoin="round"/>')),
  mid(4211, '<div class="w-[3px] h-[32px] bg-[#43534f]"></div>', 3),
  [4233, 159, '<div class="w-full h-[68px] rounded-full bg-[#224e49] flex items-center"><div class="ml-[19px] w-[40px] h-[40px] rounded-full bg-[#75a145] text-[#eef5e8] text-[22px] leading-[40px] text-center">P</div><div id="work" class="ml-[13px] flex"></div></div>'],
  mid(4435.600, svg('<circle cx="3" cy="3" r="3" fill="#bccbc8"/><circle cx="3" cy="14" r="3" fill="#bccbc8"/><circle cx="3" cy="25" r="3" fill="#bccbc8"/>', 6, 28), 6),
]);
row('url', [
  label(0, 93, 'https://', 27, 'text-[#b9c4c2]'),
  label(93, 521, 'wisdomos-phoenix-frontend.vercel.app', 27, 'text-[#e4ebea]'),
  label(614, 74, '/reset', 27, 'text-[#b9c4c2]'),
]);
row('work', [label(0, 63, 'Work', 27, 'text-[#d9eeea]', 500)]);

const B = (x, x2, t) => label(x, x2 - x, t, 23.500, 'text-[#c6cecd]');
const bg = (c) => mid(c, I.bglobe);
row('bookmarks', [
  mid(40.600, svg('<path d="M1.500 1.500h8.500v8.500H1.500zM18 1.500h8.500v8.500H18zM1.500 18h8.500v8.500H1.500zM18 18h8.500v8.500H18z" stroke="#c5cdcb" stroke-width="3"/>', 28, 28), 28),
  mid(86, '<div class="w-[3px] h-[32px] bg-[#43534f]"></div>', 3),
  mid(131.500, svg('<circle cx="8" cy="8" r="6.300" stroke="#2f6fcc" stroke-width="2.600"/><path d="M12.500 12.500l7 7" stroke="#2f6fcc" stroke-width="3"/>', 20, 20), 20),
  B(161, 344.500, 'Suggested Sites'),
  mid(394, svg('<path d="M0 6C0-2 8-2 11 4c2 4 4 10 4 14C9 20 1 17 0 6z" fill="#3f8de8"/><path d="M17 17c0-6 9-12 14-9 3 8-5 17-14 18z" fill="#d24bb8"/><path d="M31 8c-4-1-8 1-10 4l8 2z" fill="#ea5a4a"/><path d="M4 28c0-6 6-9 9-7 0 7-3 11-8 11z" fill="#58a64b"/><path d="M17 30c0-4 2-7 5-8 3 3 3 8 0 10-2 1-5 1-5-2z" fill="#f0a05a"/>')),
  B(423, 620, 'Web Slice Gallery'),
  bg(668), B(697, 914, 'Éditeur officiel du...'),
  bg(976), B(1004, 1069, 'Gmail'),
  mid(1117, svg('<rect y="4" width="32" height="24" rx="6" fill="#e93340"/><path d="M12.500 10.500l8.500 5.500-8.500 5.500z" fill="#fff"/>')), B(1146, 1241, 'YouTube'),
  mid(1290, svg('<path d="M16 0c-6 0-11 4-11 11 0 8 8 10 11 21 3-11 11-13 11-21 0-7-5-11-11-11z" fill="#3d9a50"/><path d="M8 4a11 11 0 0 1 18 2l-10 5z" fill="#3c76e0"/><path d="M5 11c0-3 1-5 3-7l6 6-7 8c-1-2-2-4-2-7z" fill="#e04a3c"/><path d="M7 18l12-4 4 4-7 8c-3-4-6-5-9-8z" fill="#f2c03d"/><circle cx="16" cy="11" r="4" fill="#24483f"/>')), B(1318.500, 1380, 'Maps'),
  mid(1428, svg('<path d="M0 0h32v32H0z" fill="#fff"/><circle cx="16" cy="16" r="11" stroke="#3a3a3a" stroke-width="2.400"/><path d="M16 2v28M2 16h28" stroke="#3a3a3a" stroke-width="2"/><path d="M16 6l3 7 7 3-7 3-3 7-3-7-7-3 7-3z" fill="#4a4a4a"/><path d="M16 10v12M10 16h12" stroke="#fff" stroke-width="1"/>')), B(1457, 1687, 'NATO - Official tex...'),
  bg(1736), B(1765, 1994, 'Problems of U.S. F...'),
  bg(2044), B(2073, 2299, 'The European Cris...'),
  bg(2352), B(2380, 2601, 'Director of Nation...'),
  bg(2660), B(2689, 2911, 'Partnership for Pe...'),
  bg(2968), B(2996, 3227, 'Nuremberg Trials -...'),
  bg(3276), B(3305, 3537, 'NATO - Declassifie...'),
  mid(3584, svg('<path d="M0 0h32v32H0z" fill="#a12019"/><path d="M5 3v26M9 5v22M25 4v24M29 3v26" stroke="#c98a85" stroke-width="3" stroke-dasharray="3 1.500"/><path d="M12 4h10M17 4v20c0 5-6 5-6 1" stroke="#f3e4e2" stroke-width="3.500"/>')), B(3612, 3840, 'Perestroika as Rev...'),
  mid(4161.600, svg('<path d="M1.500 1.500 8.500 8.500 1.500 15.500M10.500 1.500l7 7-7 7" stroke="#c5cdcb" stroke-width="2.400"/>', 20, 17), 20),
  mid(4207.600, '<div class="w-[3px] h-[32px] bg-[#43534f]"></div>', 3),
  mid(4258, svg('<path d="M1.500 4a2 2 0 0 1 2-2h8l3.500 4h14a2 2 0 0 1 2 2v15a2 2 0 0 1-2 2h-25.500a2 2 0 0 1-2-2z" stroke="#c5cdcb" stroke-width="2.600"/>', 32, 26)),
  B(4291, 4451, 'All Bookmarks'),
]);
</script>
</body>
</html>
